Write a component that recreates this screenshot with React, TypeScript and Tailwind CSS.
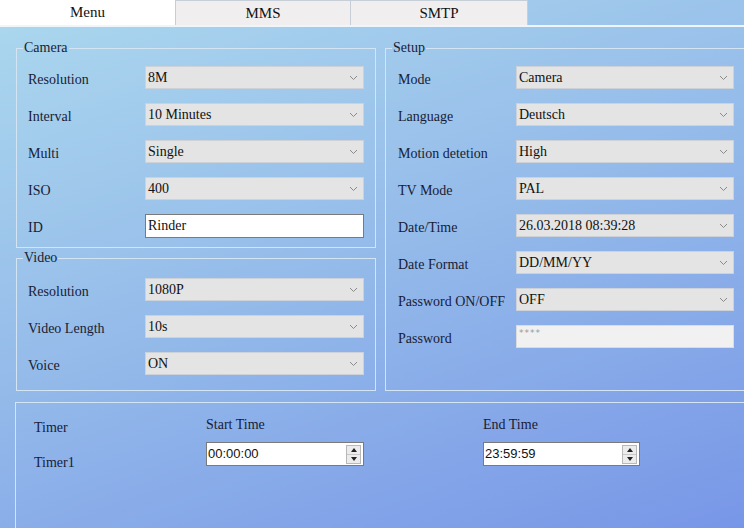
import type { ReactNode } from 'react'

const serif = "font-['Liberation_Serif','Times_New_Roman',serif]"

function Chevron() {
  return (
    <svg width="9" height="6" viewBox="0 0 9 6" className="shrink-0">
      <polyline points="1,1 4.5,4.5 8,1" fill="none" stroke="#8a8a8a" strokeWidth="1" />
    </svg>
  )
}

function Select({ value, width }: { value: string; width: string }) {
  return (
    <div className={`flex h-[23px] ${width} items-center justify-between border border-[#cdd2d8] bg-[#e4e4e4] pl-[2px] pr-[5px] text-[14px] text-[#111]`}>
      <span>{value}</span>
      <Chevron />
    </div>
  )
}

function Row({ label, labelW, children }: { label: string; labelW: string; children: ReactNode }) {
  return (
    <div className="flex h-[23px] items-center">
      <span className={`${labelW} shrink-0 pt-[3px] text-[14px] text-[#191c35]`}>{label}</span>
      {children}
    </div>
  )
}

function Legend({ children }: { children: ReactNode }) {
  return <legend className="ml-[6px] px-[1px] text-[14px] leading-[16px] text-[#191c35]">{children}</legend>
}

function Spinner() {
  return (
    <div className="mr-[2px] flex h-[19px] w-[15px] flex-col border border-[#b8b8b8] bg-[#ececec]">
      <div className="flex flex-1 items-center justify-center border-b border-[#c8c8c8]">
        <svg width="6" height="4" viewBox="0 0 6 4"><polygon points="3,0 6,4 0,4" fill="#222" /></svg>
      </div>
      <div className="flex flex-1 items-center justify-center">
        <svg width="6" height="4" viewBox="0 0 6 4"><polygon points="0,0 6,0 3,4" fill="#222" /></svg>
      </div>
    </div>
  )
}

function TimeInput({ value, width }: { value: string; width: string }) {
  return (
    <div className={`flex h-[24px] ${width} items-center justify-between border border-[#7a7a7a] bg-white pl-[1px]`}>
      <span className="font-['Liberation_Sans',Arial,sans-serif] text-[13px] text-[#111]">{value}</span>
      <Spinner />
    </div>
  )
}

export default function App() {
  const camera = [
    ['Resolution', '8M'],
    ['Interval', '10 Minutes'],
    ['Multi', 'Single'],
    ['ISO', '400'],
  ]
  const video = [
    ['Resolution', '1080P'],
    ['Video Length', '10s'],
    ['Voice', 'ON'],
  ]
  const setup = [
    ['Mode', 'Camera'],
    ['Language', 'Deutsch'],
    ['Motion detetion', 'High'],
    ['TV Mode', 'PAL'],
    ['Date/Time', '26.03.2018 08:39:28'],
    ['Date Format', 'DD/MM/YY'],
    ['Password ON/OFF', 'OFF'],
  ]

  return (
    <div className={`${serif} relative h-[528px] w-[744px] overflow-hidden bg-[linear-gradient(160deg,#acd8ee_0%,#96bdea_45%,#7896e7_100%)]`}>
      {/* Tabs */}
      <div className="flex h-[25px] text-[15px] text-[#111]">
        <div className="flex w-[175px] items-center justify-center bg-white">Menu</div>
        <div className="flex w-[176px] items-center justify-center border-x border-t border-[#c6ced8] bg-[#f0eeee]">MMS</div>
        <div className="flex w-[177px] items-center justify-center border-r border-t border-[#c6ced8] bg-[#f0eeee]">SMTP</div>
      </div>
      <div className="h-[2px] bg-[#eef5fb]" />

      <div className="flex gap-[9px] pl-[16px] pt-[13px]">
        {/* Left column */}
        <div className="flex w-[360px] shrink-0 flex-col">
          <fieldset className="border border-[#d3e4f2]">
            <Legend>Camera</Legend>
            <div className="flex flex-col gap-[14px] pb-[10px] pl-[11px] pt-[10px]">
              {camera.map(([l, v]) => (
                <Row key={l} label={l} labelW="w-[117px]">
                  <Select value={v} width="w-[219px]" />
                </Row>
              ))}
              <Row label="ID" labelW="w-[117px]">
                <div className="flex h-[24px] w-[219px] items-center border border-[#7a7a7a] bg-white pl-[2px] text-[14px] text-[#111]">Rinder</div>
              </Row>
            </div>
          </fieldset>
          <fieldset className="mt-[2px] border border-[#d3e4f2]">
            <Legend>Video</Legend>
            <div className="flex flex-col gap-[14px] pb-[15px] pl-[11px] pt-[12px]">
              {video.map(([l, v]) => (
                <Row key={l} label={l} labelW="w-[117px]">
                  <Select value={v} width="w-[219px]" />
                </Row>
              ))}
            </div>
          </fieldset>
        </div>

        {/* Setup */}
        <fieldset className="w-[380px] shrink-0 border border-[#d3e4f2]">
          <Legend>Setup</Legend>
          <div className="flex flex-col gap-[14px] pl-[12px] pt-[10px]">
            {setup.map(([l, v]) => (
              <Row key={l} label={l} labelW="w-[118px]">
                <Select value={v} width="w-[218px]" />
              </Row>
            ))}
            <Row label="Password" labelW="w-[118px]">
              <div className="h-[23px] w-[218px] border border-[#dcdcdc] bg-[#f1f1f1] pl-[2px] pt-[1px] font-['DejaVu_Sans',sans-serif] text-[9px] tracking-[1px] text-[#9a9a9a]">
                ****
              </div>
            </Row>
          </div>
        </fieldset>
      </div>

      {/* Timer */}
      <fieldset className="ml-[15px] mt-[11px] h-[160px] w-[760px] border border-[#d3e4f2]">
        <div className="flex pl-[18px] text-[14px] text-[#191c35]">
          <div className="flex w-[172px] flex-col gap-[19px] pt-[17px]">
            <span className="leading-[16px]">Timer</span>
            <span className="leading-[16px]">Timer1</span>
          </div>
          <div className="flex w-[277px] flex-col pt-[14px]">
            <span className="leading-[16px]">Start Time</span>
            <div className="mt-[9px]">
              <TimeInput value="00:00:00" width="w-[158px]" />
            </div>
          </div>
          <div className="flex flex-col pt-[14px]">
            <span className="leading-[16px]">End Time</span>
            <div className="mt-[9px]">
              <TimeInput value="23:59:59" width="w-[157px]" />
            </div>
          </div>
        </div>
      </fieldset>
    </div>
  )
}
